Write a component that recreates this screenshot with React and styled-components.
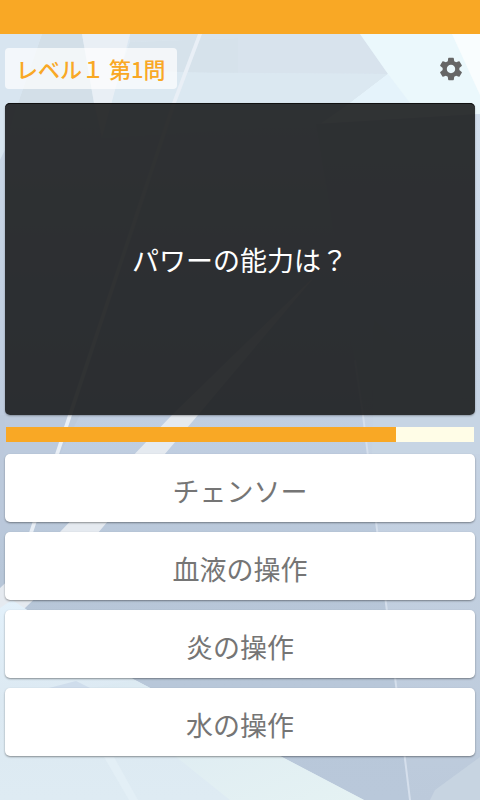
import React, { useState } from 'react';
import styled, { createGlobalStyle } from 'styled-components';
import { MdSettings } from 'react-icons/md';

const GlobalStyle = createGlobalStyle`
  * {
    box-sizing: border-box;
  }

  body {
    margin: 0;
    background: #c1cedf;
    font-family: 'Noto Sans CJK JP', sans-serif;
  }
`;

const Page = styled.div`
  position: relative;
  min-height: 100vh;
  display: flex;
  flex-direction: column;
`;

const Backdrop = styled.svg`
  position: absolute;
  inset: 0;
  width: 100%;
  height: 100%;
  z-index: -1;
`;

const StatusBar = styled.header`
  height: 34px;
  background: #f9a825;
`;

const Content = styled.main`
  flex: 1;
  display: flex;
  flex-direction: column;
  padding: 14px 5px 44px;
`;

const TopRow = styled.div`
  display: flex;
  align-items: center;
  justify-content: space-between;
  margin-bottom: 14px;
  padding-right: 10px;
`;

const LevelLabel = styled.h1`
  margin: 0;
  padding: 0 11px;
  border-radius: 4px;
  background: rgba(255, 255, 255, 0.7);
  color: #f9a825;
  font-size: 22px;
  font-weight: 500;
  line-height: 41px;
`;

const SettingsButton = styled.button`
  display: flex;
  padding: 0;
  border: 0;
  background: none;
  color: #666;
  cursor: pointer;
`;

const QuestionCard = styled.section`
  flex: 1;
  display: flex;
  align-items: center;
  justify-content: center;
  min-height: 160px;
  padding: 18px 16px 16px;
  border-radius: 5px;
  background: rgba(25, 26, 27, 0.89);
  box-shadow: inset 0 1px 0 #111, 0 1px 2px rgba(0, 0, 0, 0.3);
`;

const QuestionText = styled.p`
  margin: 0;
  color: #fff;
  font-size: 27px;
  line-height: 40px;
`;

const TimeTrack = styled.div`
  height: 15px;
  margin: 12px 1px;
  background: #fffde7;
`;

const TimeFill = styled.div`
  height: 100%;
  background: #f9a825;
`;

const Answers = styled.div`
  display: grid;
  gap: 10px;
`;

const AnswerButton = styled.button`
  height: 68px;
  padding: 6px 16px 0;
  border: 0;
  border-radius: 5px;
  background: #fff;
  box-shadow: 0 1px 2px rgba(0, 0, 0, 0.4);
  color: #757575;
  font-family: inherit;
  font-size: 27px;
  font-weight: 400;
  line-height: 40px;
  cursor: pointer;
`;

const quiz = {
  level: 'レベル１ 第1問',
  question: 'パワーの能力は？',
  answers: ['チェンソー', '血液の操作', '炎の操作', '水の操作'],
};

const CrystalBackdrop = () => (
  <Backdrop viewBox="0 0 480 800" preserveAspectRatio="none" aria-hidden="true">
    <defs>
      <linearGradient id="base" x1="0" y1="0" x2="0" y2="1">
        <stop offset="0" stopColor="#dce7f1" />
        <stop offset="0.13" stopColor="#dbe8f3" />
        <stop offset="0.35" stopColor="#cbd8e8" />
        <stop offset="0.52" stopColor="#c1cfe2" />
        <stop offset="0.72" stopColor="#b7c6d8" />
        <stop offset="1" stopColor="#b9c8da" />
      </linearGradient>
      <linearGradient id="corner" x1="0" y1="0" x2="0" y2="1">
        <stop offset="0" stopColor="#e3f1fb" />
        <stop offset="0.5" stopColor="#dce9f2" />
        <stop offset="1" stopColor="#deebf3" />
      </linearGradient>
      <linearGradient id="ice" x1="0" y1="0" x2="1" y2="1">
        <stop offset="0" stopColor="#dbe9f2" />
        <stop offset="1" stopColor="#e5f2f3" />
      </linearGradient>
      <linearGradient id="right" x1="0" y1="0" x2="0" y2="1">
        <stop offset="0" stopColor="#d3dfed" />
        <stop offset="0.35" stopColor="#c8d5e5" />
        <stop offset="1" stopColor="#bccadb" />
      </linearGradient>
    </defs>
    <rect width="480" height="800" fill="url(#base)" />
    <polygon points="42,34 82,34 94,103 18,103" fill="#d3dfe8" />
    <polygon points="0,34 42,34 18,103 0,160" fill="#d8e5f0" />
    <polygon points="82,34 130,34 112,103 102,138 94,103" fill="#e9eff5" />
    <polygon points="130,34 240,34 240,38 130,42" fill="#d8e3ec" />
    <polygon points="130,42 240,38 240,74 120,70" fill="#d6e2eb" />
    <polygon points="238,34 360,34 388,74 238,73" fill="#d8e3ed" />
    <polygon points="120,72 388,74 350,103 320,124 102,138" fill="#dbe8f1" />
    <polygon points="360,34 480,34 480,114 320,124 350,103 388,74" fill="#ebf8fc" />
    <polygon points="388,74 410,103 350,103" fill="#e5f3fb" />
    <polygon points="452,34 480,34 480,95" fill="#f9fdfe" />
    <polygon points="0,160 5,150 5,420 0,560" fill="#bccadb" opacity="0.5" />
    <polygon points="316,124 480,114 480,800 410,800 364,415" fill="url(#right)" />
    <polygon points="374,320 480,415 480,454 372,454" fill="#c8d5e4" opacity="0.7" />
    <polygon points="0,415 80,415 60,454 5,532 0,540" fill="#bac8da" opacity="0.6" />
    <polygon points="198,34 202,34 176,103 72,415 20,572 16,572 68,415 172,103" fill="#e9eff6" />
    <polygon points="316,275 198,415 75,560 0,632 0,588 60,532 172,415" fill="#e5eaf0" />
    <path d="M355 360 L363 415 L410 800" fill="none" stroke="#d5dfec" strokeWidth="2" />
    <polygon points="0,608 12,600 135,680 364,800 0,800" fill="url(#corner)" />
    <polygon points="135,680 282,757 364,800 230,800 90,688" fill="url(#ice)" />
    <polygon points="45,689 76,681 92,689" fill="#cfddec" />
    <polygon points="104,757 114,757 138,800 129,800" fill="#e3eff6" />
    <polygon points="480,757 435,790 430,800 480,800" fill="#c7d4e1" />
  </Backdrop>
);

const App = () => {
  const [remaining] = useState(390 / 468);

  return (
    <>
      <GlobalStyle />
      <Page>
        <CrystalBackdrop />
        <StatusBar />
        <Content>
          <TopRow>
            <LevelLabel>{quiz.level}</LevelLabel>
            <SettingsButton type="button" aria-label="設定">
              <MdSettings size={28} />
            </SettingsButton>
          </TopRow>
          <QuestionCard>
            <QuestionText>{quiz.question}</QuestionText>
          </QuestionCard>
          <TimeTrack>
            <TimeFill style={{ width: `${remaining * 100}%` }} />
          </TimeTrack>
          <Answers>
            {quiz.answers.map((answer) => (
              <AnswerButton key={answer} type="button">
                {answer}
              </AnswerButton>
            ))}
          </Answers>
        </Content>
      </Page>
    </>
  );
};

export default App;
